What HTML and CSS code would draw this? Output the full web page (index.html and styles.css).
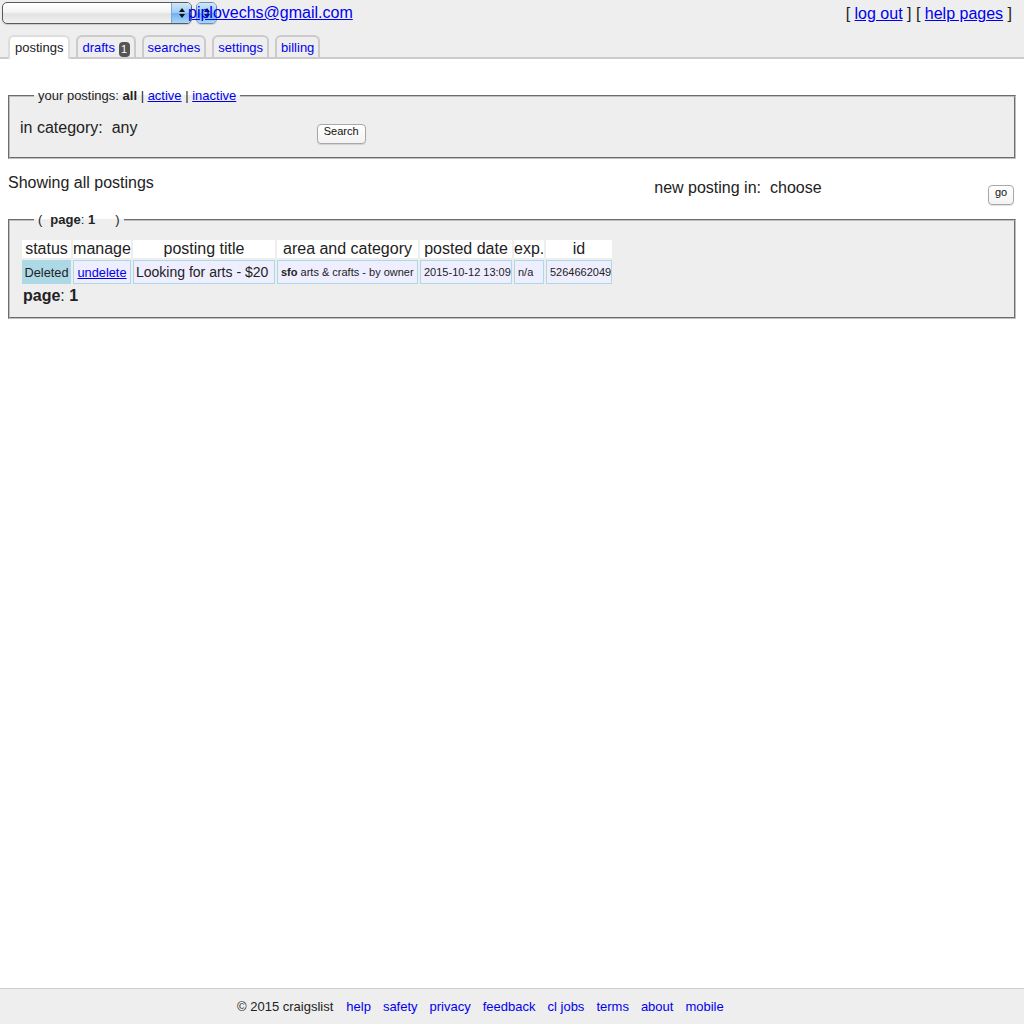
FILE: index.html
```html
<!DOCTYPE html>
<html lang="en">
<head>
<meta charset="utf-8">
<title>craigslist account</title>
<link rel="stylesheet" href="styles.css">
</head>
<body>
<div class="page">
  <header class="header">
    <div class="toprow">
      <div class="account">
        <div class="sel sel-big">
          <span class="sel-btn">
            <svg width="8" height="12" viewBox="0 0 8 12"><path d="M4 1 L7 5 L1 5 Z M4 11 L7 7 L1 7 Z" fill="#111"/></svg>
          </span>
        </div>
        <div class="email-wrap">
          <div class="sel sel-small">
            <span class="sel-btn">
              <svg width="8" height="12" viewBox="0 0 8 12"><path d="M4 1 L7 5 L1 5 Z M4 11 L7 7 L1 7 Z" fill="#111"/></svg>
            </span>
          </div>
          <a class="email" href="#">piplovechs@gmail.com</a>
        </div>
      </div>
      <div class="toplinks">[ <a href="#">log out</a> ] [ <a href="#">help pages</a> ]</div>
    </div>
    <nav class="tabs">
      <span class="tab active">postings</span>
      <a class="tab" href="#">drafts <span class="badge">1</span></a>
      <a class="tab" href="#">searches</a>
      <a class="tab" href="#">settings</a>
      <a class="tab" href="#">billing</a>
    </nav>
  </header>

  <main class="content">
    <fieldset class="box filter">
      <legend>your postings: <b>all</b> | <a href="#">active</a> | <a href="#">inactive</a></legend>
      <div class="filter-row">
        <span class="lbl">in category:</span>
        <span class="val">any</span>
        <button class="btn search" type="button">Search</button>
      </div>
    </fieldset>

    <div class="midrow">
      <div class="showing">Showing all postings</div>
      <div class="newpost">
        <span class="lbl">new posting in:</span>
        <span class="choose">choose</span>
        <button class="btn go" type="button">go</button>
      </div>
    </div>

    <fieldset class="box results">
      <legend><span class="paren">(</span><b>page</b>: <b>1</b><span class="paren close">)</span></legend>
      <table class="posts">
        <thead>
          <tr>
            <th class="c-status">status</th>
            <th class="c-manage">manage</th>
            <th class="c-title">posting title</th>
            <th class="c-area">area and category</th>
            <th class="c-date">posted date</th>
            <th class="c-exp">exp.</th>
            <th class="c-id">id</th>
          </tr>
        </thead>
        <tbody>
          <tr>
            <td class="status">Deleted</td>
            <td class="manage"><a href="#">undelete</a></td>
            <td class="title">Looking for arts - $20</td>
            <td class="small"><b>sfo</b> arts &amp; crafts - by owner</td>
            <td class="small">2015-10-12 13:09</td>
            <td class="small">n/a</td>
            <td class="small">5264662049</td>
          </tr>
        </tbody>
      </table>
      <div class="pager"><b>page</b>: <b>1</b></div>
    </fieldset>
  </main>

  <footer class="footer">
    <span class="copy">© 2015 craigslist</span>
    <a href="#">help</a>
    <a href="#">safety</a>
    <a href="#">privacy</a>
    <a href="#">feedback</a>
    <a href="#">cl jobs</a>
    <a href="#">terms</a>
    <a href="#">about</a>
    <a href="#">mobile</a>
  </footer>
</div>
</body>
</html>
```

FILE: styles.css
```css
* { box-sizing: border-box; }

html, body {
  margin: 0;
  padding: 0;
  background: #fff;
}

body {
  font-family: "Liberation Sans", Arial, Helvetica, sans-serif;
  font-size: 16px;
  color: #222;
}

a { color: #00e; }

.page {
  min-height: 100vh;
  display: flex;
  flex-direction: column;
}

/* ---------- header ---------- */
.header {
  background: #eee;
  border-bottom: 2px solid #ccc;
  height: 59px;
  display: flex;
  flex-direction: column;
}

.toprow {
  display: flex;
  justify-content: space-between;
  align-items: flex-start;
  padding: 2px 12px 0 2px;
  height: 24px;
}

.account {
  display: flex;
  align-items: flex-start;
}

.sel {
  height: 22px;
  border: 1px solid #5a5a5a;
  border-radius: 5px;
  background: linear-gradient(#ffffff 0%, #f4f4f4 45%, #e2e2e2 55%, #f2f2f2 100%);
  display: flex;
  justify-content: flex-end;
  overflow: hidden;
  box-shadow: 0 1px 1px rgba(0,0,0,0.15);
}

.sel-big { width: 190px; }

.sel-btn {
  width: 20px;
  height: 100%;
  background: linear-gradient(#cfe6fb 0%, #9fcdf6 48%, #6fb2ef 52%, #a9d6fa 100%);
  border-left: 1px solid #7aa9d6;
  display: flex;
  align-items: center;
  justify-content: center;
}

.email-wrap {
  position: relative;
  margin-left: -4px;
  line-height: 18px;
  padding-top: 2px;
}

.sel-small {
  position: absolute;
  left: 8px;
  top: 0;
  width: 21px;
  border-color: #6b8fb3;
  z-index: 0;
}

.sel-small .sel-btn {
  width: 100%;
  border-left: none;
}

.email {
  position: relative;
  z-index: 1;
  font-size: 16px;
}

.toplinks {
  font-size: 16px;
  line-height: 18px;
  padding-top: 3px;
}

.tabs {
  display: flex;
  align-items: flex-end;
  gap: 6px;
  padding-left: 8px;
  margin-top: auto;
}

.tab {
  height: 22px;
  padding: 3px 4px 0;
  border: 2px solid #cbcbcb;
  border-bottom: none;
  border-radius: 6px 6px 0 0;
  background: #eee;
  font-size: 13px;
  line-height: 15px;
  text-decoration: none;
  color: #00e;
  white-space: nowrap;
}

.tab.active {
  background: #fff;
  color: #222;
  height: 24px;
  margin-bottom: -2px;
  border-color: #ddd;
  padding: 3px 5px 0;
}

.badge {
  display: inline-block;
  background: #555;
  color: #fff;
  font-size: 11px;
  line-height: 15px;
  width: 11px;
  text-align: center;
  border-radius: 4px;
  vertical-align: -1px;
}

/* ---------- content ---------- */
.content {
  padding: 29px 8px 0;
}

.box {
  margin: 0;
  background: #eee;
  border: 2px groove #c0c0c0;
  min-width: 0;
}

.box legend {
  font-size: 13px;
  line-height: 15px;
  padding: 0 4px;
  margin-left: 14px;
}

.filter {
  padding: 16px 10px 15px;
}

.filter-row {
  display: flex;
  align-items: baseline;
  line-height: 18px;
}

.filter-row .val {
  margin-left: 9px;
  width: 205px;
}

.btn {
  font-family: "Liberation Sans", Arial, Helvetica, sans-serif;
  font-size: 11px;
  color: #111;
  background: linear-gradient(#ffffff, #f3f3f3);
  border: 1px solid #a8a8a8;
  border-radius: 4px;
  height: 20px;
  padding: 0 6px 5px;
  line-height: 13px;
  box-shadow: 0 1px 1px rgba(0,0,0,0.12);
}

.btn.search {
  position: relative;
  top: 2px;
}

.midrow {
  display: flex;
  justify-content: space-between;
  align-items: flex-start;
  margin-top: 15px;
  line-height: 18px;
}

.newpost {
  display: flex;
  align-items: baseline;
  margin-top: 5px;
  margin-right: 2px;
}

.newpost .choose {
  margin-left: 9px;
  width: 218px;
}

.btn.go {
  width: 26px;
  padding: 0 0 5px;
  position: relative;
  top: 3px;
}

.results {
  margin-top: 10px;
  padding: 11px 10px 12px;
}

.paren { margin-right: 8px; }
.paren.close { margin-left: 20px; margin-right: 0; }

.posts {
  table-layout: fixed;
  width: 594px;
  border-collapse: separate;
  border-spacing: 2px;
}

.posts th {
  background: #fff;
  font-weight: normal;
  font-size: 16px;
  line-height: 18px;
  padding: 0;
  text-align: center;
  white-space: nowrap;
}

.c-status { width: 49px; }
.c-manage { width: 58px; }
.c-title { width: 142px; }
.c-area { width: 141px; }
.c-date { width: 92px; }
.c-exp { width: 30px; }
.c-id { width: 66px; }

.posts td {
  background: #eef;
  border: 1px solid #add8e6;
  padding: 3px 2px;
  height: 24px;
  white-space: nowrap;
  overflow: hidden;
  vertical-align: middle;
}

.posts td.status {
  background: #add8e6;
  font-size: 12.8px;
  text-align: center;
  padding: 3px 0;
}

.posts td.manage {
  font-size: 12.8px;
  text-align: center;
}

.posts td.title {
  font-size: 14px;
}

.posts td.small {
  font-size: 11px;
  padding: 3px 3px;
}

.pager {
  padding: 1px 3px 0;
  line-height: 18px;
}

/* ---------- footer ---------- */
.footer {
  margin-top: auto;
  background: #eee;
  border-top: 1px solid #ccc;
  height: 36px;
  display: flex;
  align-items: center;
  gap: 12px;
  padding-left: 237px;
  font-size: 13px;
}

.footer a { text-decoration: none; }
.footer .copy { margin-right: 1px; }
```
